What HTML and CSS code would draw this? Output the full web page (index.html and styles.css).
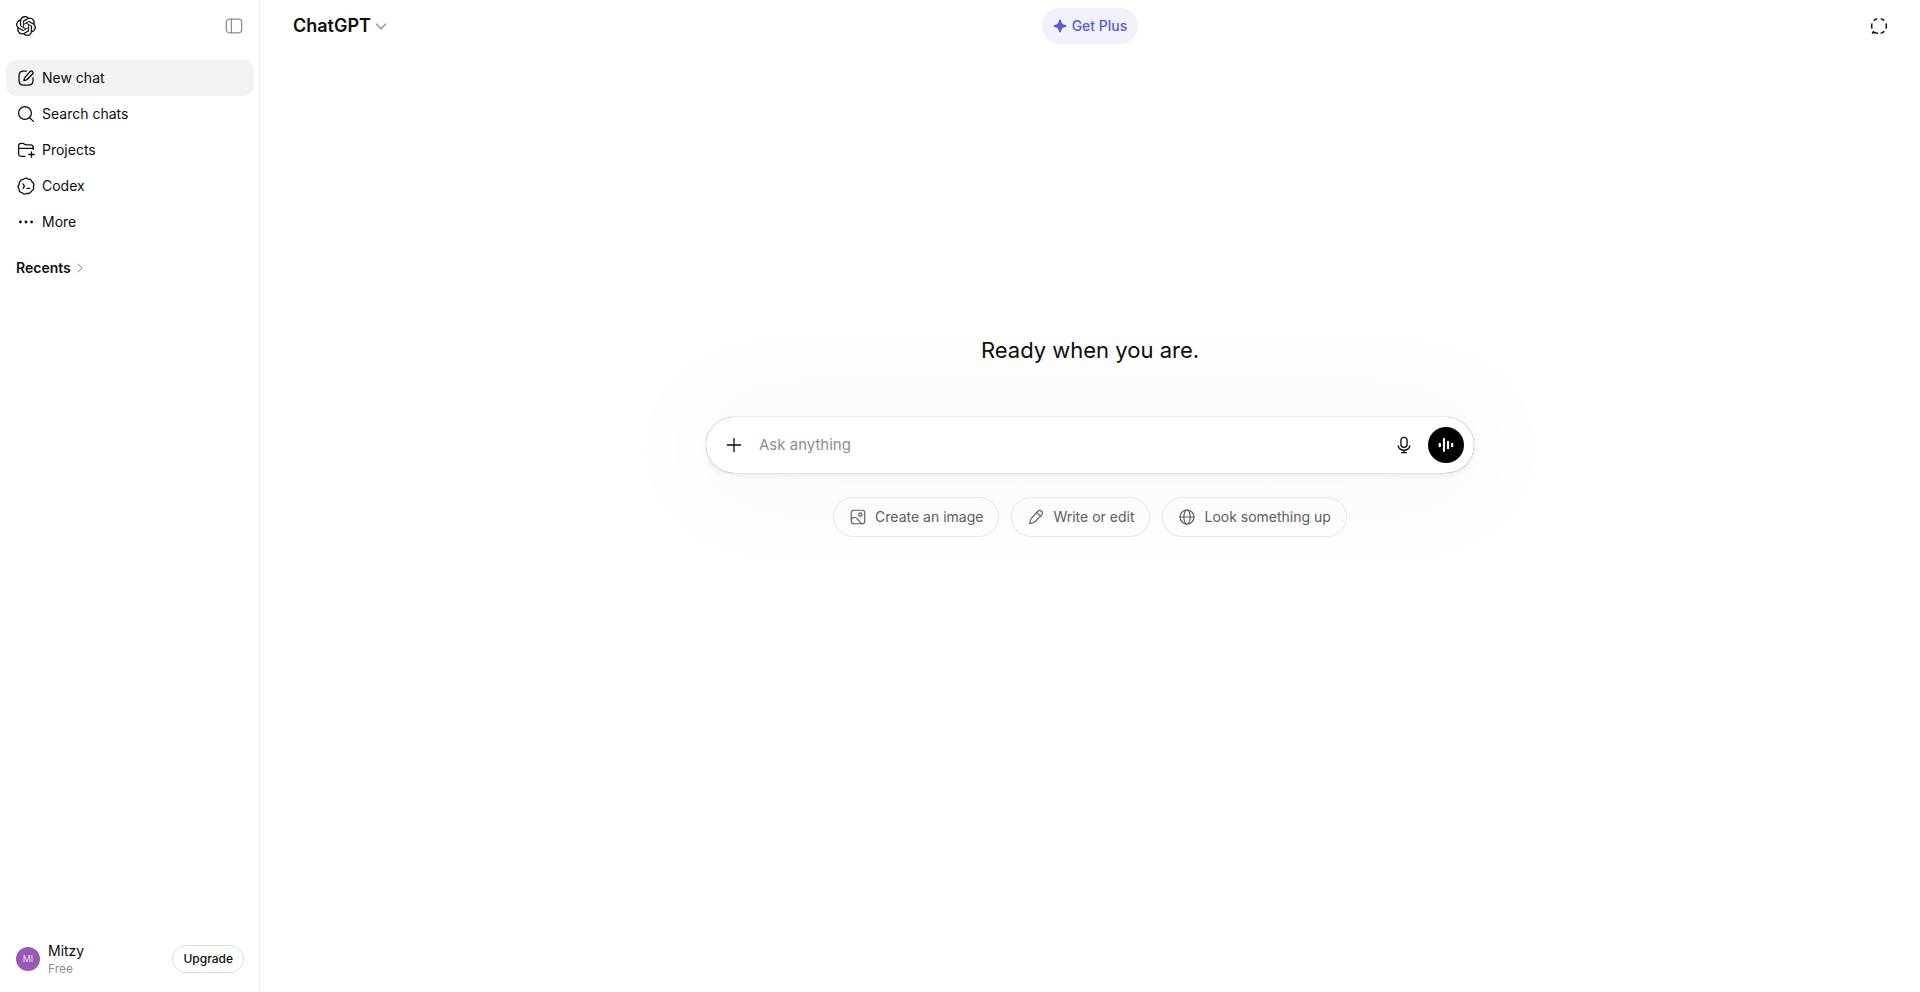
FILE: index.html
```
<!DOCTYPE html>
<html lang="en">
<head>
    <meta charset="UTF-8">
    <meta name="viewport" content="width=device-width, initial-scale=1.0">
    <title>ChatGPT</title>
    <link rel="stylesheet" href="styles.css">
</head>
<body>

    <!-- Left sidebar -->
    <aside class="sidebar">
        <div class="sidebar-top">
            <a class="logo" href="#" aria-label="Home">
                <svg width="20" height="20" viewBox="0 0 24 24" fill="currentColor"><path d="M22.2819 9.8211a5.9847 5.9847 0 0 0-.5157-4.9108 6.0462 6.0462 0 0 0-6.5098-2.9A6.0651 6.0651 0 0 0 4.9807 4.1818a5.9847 5.9847 0 0 0-3.9977 2.9 6.0462 6.0462 0 0 0 .7427 7.0966 5.98 5.98 0 0 0 .511 4.9107 6.051 6.051 0 0 0 6.5146 2.9001A5.9847 5.9847 0 0 0 13.2599 24a6.0557 6.0557 0 0 0 5.7718-4.2058 5.9894 5.9894 0 0 0 3.9977-2.9001 6.0557 6.0557 0 0 0-.7475-7.0729zm-9.022 12.6081a4.4755 4.4755 0 0 1-2.8764-1.0408l.1419-.0804 4.7783-2.7582a.7948.7948 0 0 0 .3927-.6813v-6.7369l2.02 1.1686a.071.071 0 0 1 .038.052v5.5826a4.504 4.504 0 0 1-4.4945 4.4944zm-9.6607-4.1254a4.4708 4.4708 0 0 1-.5346-3.0137l.142.0852 4.783 2.7582a.7712.7712 0 0 0 .7806 0l5.8428-3.3685v2.3324a.0804.0804 0 0 1-.0332.0615L9.74 19.9502a4.4992 4.4992 0 0 1-6.1408-1.6464zM2.3408 7.8956a4.485 4.485 0 0 1 2.3655-1.9728V11.6a.7664.7664 0 0 0 .3879.6765l5.8144 3.3543-2.0201 1.1685a.0757.0757 0 0 1-.071 0l-4.8303-2.7865A4.504 4.504 0 0 1 2.3408 7.872zm16.5963 3.8558L13.1038 8.364 15.1192 7.2a.0757.0757 0 0 1 .071 0l4.8303 2.7913a4.4944 4.4944 0 0 1-.6765 8.1042v-5.6772a.79.79 0 0 0-.407-.667zm2.0107-3.0231l-.142-.0852-4.7735-2.7818a.7759.7759 0 0 0-.7854 0L9.409 9.2297V6.8974a.0662.0662 0 0 1 .0284-.0615l4.8303-2.7866a4.4992 4.4992 0 0 1 6.6802 4.66zM8.3065 12.863l-2.02-1.1638a.0804.0804 0 0 1-.038-.0567V6.0742a4.4992 4.4992 0 0 1 7.3757-3.4537l-.142.0805L8.704 5.459a.7948.7948 0 0 0-.3927.6813zm1.0976-2.3654l2.602-1.4998 2.6069 1.4998v2.9994l-2.5974 1.4997-2.6067-1.4997Z"/></svg>
            </a>
            <button class="icon-btn toggle" type="button" aria-label="Close sidebar">
                <svg class="icon" width="20" height="20" viewBox="0 0 20 20"><rect x="2.3" y="3.2" width="15.4" height="13.6" rx="3.2"/><path d="M7.4 3.2v13.6"/></svg>
            </button>
        </div>

        <nav class="menu">
            <a class="menu-item active" href="#">
                <svg class="icon" width="20" height="20" viewBox="0 0 20 20"><path d="M10.3 3.2H7.6C4.4 3.2 3 4.6 3 7.8v4.8c0 3.2 1.4 4.6 4.6 4.6h4.8c3.2 0 4.6-1.4 4.6-4.6V10"/><path d="M14.1 3.5a1.75 1.75 0 0 1 2.5 2.5l-5.5 5.5c-.6.6-1.3.9-3.2 1.1.2-1.9.5-2.6 1.1-3.2z"/></svg>
                <span>New chat</span>
            </a>
            <a class="menu-item" href="#">
                <svg class="icon" width="20" height="20" viewBox="0 0 20 20"><circle cx="9" cy="9" r="6.4"/><path d="M13.7 13.7l3.7 3.7"/></svg>
                <span>Search chats</span>
            </a>
            <a class="menu-item" href="#">
                <svg class="icon" width="20" height="20" viewBox="0 0 20 20"><path d="M9 16.4H5.6c-2 0-3-1-3-3V6.2c0-2 .8-2.9 2.5-2.9h1.5c.8 0 1.3.3 1.8.9.4.5.9.7 1.6.7h4.6c1.8 0 2.7.9 2.7 2.9v1.6M2.6 8.3h14.7M15.5 11.8v5.4M12.8 14.5h5.4"/></svg>
                <span>Projects</span>
            </a>
            <a class="menu-item" href="#">
                <svg class="icon" width="20" height="20" viewBox="0 0 20 20"><path d="M7.2 3.4C8.5 2 10.6 1.9 12 3.1C13.900 2.900 15.600 4.100 16 5.900C17.600 6.900 18.200 8.900 17.400 10.600C18 12.400 17.200 14.300 15.500 15.100C14.800 16.900 13 17.800 11.200 17.300C9.700 18.400 7.600 18.200 6.400 16.800C4.500 16.600 3.100 15.100 3.100 13.200C1.900 11.700 1.900 9.600 3.200 8.200C2.900 6 4.700 3.600 7.200 3.400z"/><path d="M7 7.900l1.400 2.300L7 12.500M11 12.400h2.700"/></svg>
                <span>Codex</span>
            </a>
            <button class="menu-item" type="button">
                <svg width="20" height="20" viewBox="0 0 20 20" fill="currentColor"><circle cx="4.400" cy="10" r="1.400"/><circle cx="10" cy="10" r="1.400"/><circle cx="15.600" cy="10" r="1.400"/></svg>
                <span>More</span>
            </button>
        </nav>

        <button class="recents" type="button">
            <span>Recents</span>
            <svg class="icon" width="12" height="12" viewBox="0 0 12 12"><path d="M4 2l4 4-4 4"/></svg>
        </button>

        <!-- Account row -->
        <div class="account">
            <div class="avatar">MI</div>
            <div class="account-text">
                <div class="account-name">Mitzy</div>
                <div class="account-plan">Free</div>
            </div>
            <button class="upgrade" type="button">Upgrade</button>
        </div>
    </aside>

    <main class="main">
        <header class="header">
            <div class="header-left">
                <button class="model" type="button">
                    <span>ChatGPT</span>
                    <svg class="icon" width="16" height="16" viewBox="0 0 16 16"><path d="M3.300 6l4.700 4.700L12.700 6"/></svg>
                </button>
            </div>
            <button class="get-plus" type="button">
                <svg width="14" height="14" viewBox="0 0 14 14" fill="currentColor"><path d="M7 .6c.5 0 .9.3 1 .8C8.500 4.400 9.600 5.500 12.600 6c1.100.2 1.100 1.800 0 2-3 .5-4.100 1.600-4.600 4.600-.2 1.100-1.800 1.100-2 0C5.500 9.600 4.400 8.500 1.400 8c-1.100-.2-1.100-1.800 0-2 3-.5 4.100-1.600 4.600-4.600.1-.5.500-.8 1-.8z"/></svg>
                <span>Get Plus</span>
            </button>
            <div class="header-right">
                <button class="icon-btn" type="button" aria-label="Temporary chat">
                    <svg class="icon temp" width="20" height="20" viewBox="0 0 20 20"><path d="M7.800 2.900a7.400 7.400 0 0 0-2.500 1.300M12.200 2.900a7.400 7.400 0 0 1 2.500 1.300M2.900 7.900a7.400 7.400 0 0 0 0 4.200M17.100 7.900a7.400 7.400 0 0 1 0 4.200M12.200 17.100a7.400 7.400 0 0 0 2.700-1.400M8.300 17.200c-1.100-.3-1.700-.6-2.300-.6l-2.500.3c.6-.5.900-.9 1-1.400"/></svg>
                </button>
            </div>
        </header>

        <section class="content">
            <h1>Ready when you are.</h1>

            <form class="composer">
                <button class="icon-btn" type="button" aria-label="Add files">
                    <svg class="icon" width="20" height="20" viewBox="0 0 20 20"><path d="M10 3.300v13.400M3.300 10h13.400"/></svg>
                </button>
                <input class="prompt" type="text" placeholder="Ask anything" aria-label="Ask anything">
                <button class="icon-btn" type="button" aria-label="Dictate">
                    <svg class="icon" width="20" height="20" viewBox="0 0 20 20"><rect x="6.900" y="2.300" width="6.200" height="10" rx="3.100"/><path d="M4.200 11c.7 2.600 3 4.200 5.800 4.200s5.100-1.600 5.800-4.200M10 15.200v2.500M7.600 17.700h4.800"/></svg>
                </button>
                <button class="voice" type="button" aria-label="Start voice mode">
                    <svg width="20" height="20" viewBox="0 0 20 20"><path d="M3.800 8.800v2.400M8 4.200v11.600M12 6.800v6.400M16.200 8.800v2.400"/></svg>
                </button>
            </form>

            <div class="chips">
                <button class="chip" type="button">
                    <svg class="icon" width="18" height="18" viewBox="0 0 20 20"><rect x="2.500" y="2.500" width="15" height="15" rx="2.800"/><circle cx="12.600" cy="7.300" r="1.800"/><path d="M2.700 12.300c2.500-2.700 4.400-2.500 6.400-.3l5 5.300"/></svg>
                    <span>Create an image</span>
                </button>
                <button class="chip" type="button">
                    <svg class="icon" width="18" height="18" viewBox="0 0 20 20"><path d="M11.800 3.700c1.300-1.300 3.200-1.300 4.400-.1s1.200 3.100-.1 4.400l-7.200 7.200c-.9.900-2.800 1.800-5.900 2.100.3-3.100 1-4.900 1.900-5.800zM10.700 4.800l4.500 4.500"/></svg>
                    <span>Write or edit</span>
                </button>
                <button class="chip" type="button">
                    <svg class="icon" width="18" height="18" viewBox="0 0 20 20"><circle cx="10" cy="10" r="7.800"/><ellipse cx="10" cy="10" rx="3.500" ry="7.800"/><path d="M2.200 10h15.600"/></svg>
                    <span>Look something up</span>
                </button>
            </div>
        </section>
    </main>

</body>
</html>
```
FILE: styles.css
```
* {
    box-sizing: border-box;
}

body {
    margin: 0;
    display: flex;
    min-height: 100vh;
    font-family: Inter, "Liberation Sans", sans-serif;
    font-size: 14px;
    line-height: 20px;
    color: #0d0d0d;
    background-color: #fff;
}

button {
    font: inherit;
    color: inherit;
    padding: 0;
    border: none;
    background: none;
    cursor: pointer;
}

a {
    color: inherit;
    text-decoration: none;
}

svg {
    display: block;
    flex-shrink: 0;
}

.icon {
    fill: none;
    stroke: currentColor;
    stroke-width: 1.3;
    stroke-linecap: round;
    stroke-linejoin: round;
}

.icon-btn {
    display: flex;
    align-items: center;
    justify-content: center;
    width: 36px;
    height: 36px;
    border-radius: 18px;
}

/* Sidebar */
.sidebar {
    display: flex;
    flex-direction: column;
    width: 260px;
    flex-shrink: 0;
    border-right: 1px solid #ededed;
}

.sidebar-top {
    display: flex;
    align-items: center;
    justify-content: space-between;
    height: 52px;
    padding: 0 7px 0 16px;
}

.toggle {
    color: #8f8f8f;
}

.menu {
    display: flex;
    flex-direction: column;
    padding: 8px 5px 0 6px;
}

.menu-item {
    display: flex;
    align-items: center;
    gap: 6px;
    height: 36px;
    padding: 0 10px;
    border-radius: 10px;
}

.menu-item.active {
    background-color: #f2f2f2;
}

.recents {
    display: flex;
    align-items: center;
    gap: 3px;
    margin-top: 10px;
    padding: 8px 16px;
    font-weight: 600;
}

.recents .icon {
    color: #8f8f8f;
    stroke-width: 1;
}

.account {
    display: flex;
    align-items: center;
    gap: 8px;
    margin-top: auto;
    padding: 12px 15px 15px 16px;
}

.avatar {
    width: 24px;
    height: 24px;
    border-radius: 50%;
    background-color: #9b59b6;
    color: #ecdff1;
    font-size: 9px;
    line-height: 24px;
    text-align: center;
}

.account-text {
    flex: 1;
}

.account-plan {
    font-size: 12px;
    line-height: 16px;
    color: #8f8f8f;
}

.upgrade {
    height: 28px;
    padding: 0 10px;
    border: 1px solid #dedede;
    border-radius: 14px;
    font-size: 12px;
    font-weight: 500;
}

/* Main column */
.main {
    display: flex;
    flex-direction: column;
    flex: 1;
}

.header {
    display: grid;
    grid-template-columns: 1fr auto 1fr;
    align-items: center;
    height: 52px;
    padding: 0 23px;
}

.header-left {
    padding-left: 10px;
}

.header-right {
    display: flex;
    justify-content: flex-end;
}

.model {
    display: flex;
    align-items: center;
    gap: 2px;
    font-size: 18px;
    line-height: 28px;
    font-weight: 600;
}

.model .icon {
    color: #8f8f8f;
}

.get-plus {
    display: flex;
    align-items: center;
    gap: 5px;
    height: 36px;
    padding: 0 11px;
    border-radius: 18px;
    background-color: #f1f0fb;
    color: #5d5bd0;
    font-weight: 500;
}

.temp {
    stroke-width: 1.5;
}

.content {
    display: flex;
    flex-direction: column;
    align-items: center;
    padding: 280px 24px 0;
}

h1 {
    margin: 0 0 49px;
    font-size: 22px;
    line-height: 36px;
    font-weight: 400;
}

.composer {
    display: flex;
    align-items: center;
    width: 100%;
    max-width: 768px;
    height: 56px;
    padding: 0 10px;
    border-radius: 28px;
    background-color: #fff;
    box-shadow: 0 4px 4px rgba(0, 0, 0, 0.04), 0 4px 112px 16px rgba(0, 0, 0, 0.04), 0 0 1px rgba(0, 0, 0, 0.62);
}

.prompt {
    flex: 1;
    min-width: 0;
    padding: 0 7px;
    border: none;
    outline: none;
    background: none;
    font: inherit;
    font-size: 15px;
    line-height: 24px;
}

.prompt::placeholder {
    color: #8f8f8f;
    opacity: 1;
}

.voice {
    display: flex;
    align-items: center;
    justify-content: center;
    width: 36px;
    height: 36px;
    margin-left: 6px;
    border-radius: 50%;
    background-color: #000;
}

.voice svg {
    fill: none;
    stroke: #fff;
    stroke-width: 2.2;
    stroke-linecap: round;
}

.chips {
    display: flex;
    flex-wrap: wrap;
    justify-content: center;
    gap: 12px;
    margin-top: 24px;
}

.chip {
    display: flex;
    align-items: center;
    gap: 8px;
    height: 40px;
    padding: 0 15px;
    border: 1px solid #e6e6e6;
    border-radius: 20px;
    color: #5d5d5d;
}
```
